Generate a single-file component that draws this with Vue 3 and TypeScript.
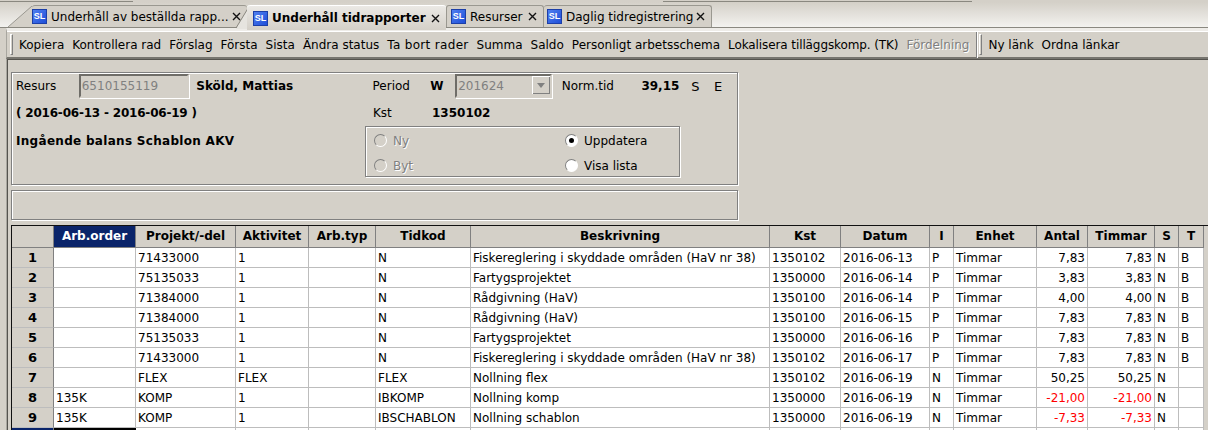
<template>
  <div class="page">
    <div class="tabstrip">
      <svg class="tab-slant" width="1208" height="29" viewBox="0 0 1208 29">
        <path d="M0 1.5 H133 M663 1.5 H972" stroke="#8a8880" fill="none" />
        <path d="M8 27 L32 6 V27 Z" stroke="none" fill="#d4d0c8" />
        <path d="M8 27 L32 6" stroke="#9a9890" fill="none" />
        <path d="M236 29 L250 5 H254 V29 Z" stroke="none" fill="#e6e4df" />
        <path d="M236 28 L250 5" stroke="#8a8880" fill="none" />
      </svg>
      <div
        v-for="tab in tabs"
        :key="tab.title"
        :class="['tab', tab.cls]"
      >
        <span class="sl-icon">SL</span>
        <span class="tab-title">{{ tab.title }}</span>
        <svg class="tab-close" width="9" height="9" viewBox="0 0 9 9">
          <path d="M1 1 L8 8 M8 1 L1 8" stroke="#111" stroke-width="1.4" fill="none" />
        </svg>
      </div>
    </div>

    <div class="toolbar">
      <span class="grip"></span>
      <span
        v-for="item in toolItems"
        :key="item.label"
        :class="['tool', item.cls, { disabled: item.disabled }]"
      >{{ item.label }}</span>
      <span class="tool-sep"></span>
      <span class="grip grip-right"></span>
      <span class="tool">Ny länk</span>
      <span class="tool">Ordna länkar</span>
    </div>

    <div class="content">
      <div class="panel panel-form">
        <div class="form-row row-top">
          <span class="lbl lbl-resurs">Resurs</span>
          <span class="field field-resurs">6510155119</span>
          <b class="name">Sköld, Mattias</b>
          <span class="lbl lbl-period">Period</span>
          <b class="lbl-w">W</b>
          <span class="field field-period">201624<span class="combo-btn"><i></i></span></span>
          <span class="lbl lbl-norm">Norm.tid</span>
          <b class="norm-value">39,15</b>
          <span class="flag">S</span>
          <span class="flag">E</span>
        </div>
        <div class="form-row row-mid">
          <b class="range">( 2016-06-13 - 2016-06-19 )</b>
          <span class="lbl lbl-kst">Kst</span>
          <b>1350102</b>
        </div>
        <div class="form-row row-bottom">
          <b class="balance">Ingående balans Schablon AKV</b>
          <div class="radio-box">
            <label
              v-for="radio in radios"
              :key="radio.label"
              :class="['radio', { off: radio.disabled }]"
            >
              <span :class="['dot', { checked: radio.checked }]"></span>
              {{ radio.label }}
            </label>
          </div>
        </div>
      </div>

      <div class="panel panel-empty"></div>

      <div class="grid">
        <div class="grid-row head">
          <div class="corner"></div>
          <div
            v-for="(col, i) in columns"
            :key="col"
            :class="['hcell', { active: i === 0 }]"
          >{{ col }}</div>
        </div>
        <div v-for="(row, r) in rows" :key="r" class="grid-row">
          <div class="rownum">{{ r + 1 }}</div>
          <div
            v-for="(val, c) in row"
            :key="c"
            :class="['cell', { num: c === 10 || c === 11, neg: val.startsWith('-') }]"
          >{{ val }}</div>
        </div>
        <div class="grid-row">
          <div class="rownum current"></div>
          <div class="cell focus"></div>
          <div v-for="c in 13" :key="c" class="cell"></div>
        </div>
      </div>
    </div>
  </div>
</template>

<script setup lang="ts">
interface ToolItem {
  label: string;
  cls?: string;
  disabled?: boolean;
}

const tabs = [
  { title: 'Underhåll av beställda rapp...', cls: 'tab-first' },
  { title: 'Underhåll tidrapporter', cls: 'tab-active' },
  { title: 'Resurser', cls: 'tab-res' },
  { title: 'Daglig tidregistrering', cls: 'tab-daily' },
];

const toolItems: ToolItem[] = [
  { label: 'Kopiera' },
  { label: 'Kontrollera rad' },
  { label: 'Förslag' },
  { label: 'Första' },
  { label: 'Sista' },
  { label: 'Ändra status' },
  { label: 'Ta bort rader', cls: 'tool-wide' },
  { label: 'Summa' },
  { label: 'Saldo' },
  { label: 'Personligt arbetsschema' },
  { label: 'Lokalisera tilläggskomp. (TK)', cls: 'tool-tight' },
  { label: 'Fördelning', disabled: true },
];

const radios = [
  { label: 'Ny', disabled: true },
  { label: 'Uppdatera', checked: true },
  { label: 'Byt', disabled: true },
  { label: 'Visa lista' },
];

const columns = [
  'Arb.order', 'Projekt/-del', 'Aktivitet', 'Arb.typ', 'Tidkod', 'Beskrivning', 'Kst',
  'Datum', 'I', 'Enhet', 'Antal', 'Timmar', 'S', 'T',
];

const FISK = 'Fiskereglering i skyddade områden (HaV nr 38)';

const rows: string[][] = [
  ['', '71433000', '1', '', 'N', FISK, '1350102', '2016-06-13', 'P', 'Timmar', '7,83', '7,83', 'N', 'B'],
  ['', '75135033', '1', '', 'N', 'Fartygsprojektet', '1350000', '2016-06-14', 'P', 'Timmar', '3,83', '3,83', 'N', 'B'],
  ['', '71384000', '1', '', 'N', 'Rådgivning (HaV)', '1350100', '2016-06-14', 'P', 'Timmar', '4,00', '4,00', 'N', 'B'],
  ['', '71384000', '1', '', 'N', 'Rådgivning (HaV)', '1350100', '2016-06-15', 'P', 'Timmar', '7,83', '7,83', 'N', 'B'],
  ['', '75135033', '1', '', 'N', 'Fartygsprojektet', '1350000', '2016-06-16', 'P', 'Timmar', '7,83', '7,83', 'N', 'B'],
  ['', '71433000', '1', '', 'N', FISK, '1350102', '2016-06-17', 'P', 'Timmar', '7,83', '7,83', 'N', 'B'],
  ['', 'FLEX', 'FLEX', '', 'FLEX', 'Nollning flex', '1350102', '2016-06-19', 'N', 'Timmar', '50,25', '50,25', 'N', ''],
  ['135K', 'KOMP', '1', '', 'IBKOMP', 'Nollning komp', '1350000', '2016-06-19', 'N', 'Timmar', '-21,00', '-21,00', 'N', ''],
  ['135K', 'KOMP', '1', '', 'IBSCHABLON', 'Nollning schablon', '1350000', '2016-06-19', 'N', 'Timmar', '-7,33', '-7,33', 'N', ''],
];
</script>

<style>
html,
body {
  margin: 0;
  background: #d4d0c8;
}
</style>

<style scoped>
.page {
  width: 1208px;
  height: 430px;
  overflow: hidden;
  background: #d4d0c8;
  color: #000;
  font: 12px "DejaVu Sans", sans-serif;
  white-space: nowrap;
}

/* Tabs */
.tabstrip {
  position: relative;
  display: flex;
  align-items: flex-end;
  height: 28px;
  box-sizing: border-box;
  padding-left: 32px;
  background: linear-gradient(#d4d0c8 8%, #f3f2ef);
  border-bottom: 1px solid #8a8880;
}

.tab-slant {
  position: absolute;
  left: 0;
  top: 0;
}

.tab {
  display: flex;
  align-items: center;
  height: 22px;
  box-sizing: border-box;
  border-top: 1px solid #9a9890;
  border-radius: 3px 3px 0 0;
  background: #d4d0c8;
}

.tab-first {
  width: 215px;
}

.tab-active {
  position: relative;
  width: 199px;
  height: 25px;
  margin-bottom: -3px;
  padding-left: 6px;
  border-top-color: #fff;
  background: linear-gradient(#ebe9e5, #d4d0c8);
  font-weight: bold;
}

.tab-res {
  width: 98px;
  padding-left: 4px;
  border-left: 1px solid #9a9890;
  border-right: 1px solid #9a9890;
}

.tab-daily {
  width: 168px;
  padding-left: 3px;
  border-right: 1px solid #9a9890;
}

.sl-icon {
  width: 15px;
  height: 15px;
  flex: none;
  box-sizing: border-box;
  margin-right: 4px;
  border: 1px solid #1c3fa8;
  background: linear-gradient(135deg, #4f7ff0, #1f4fd8);
  color: #fff;
  font: bold 9px/13px "Liberation Sans", sans-serif;
  text-align: center;
}

.tab-title {
  flex: 1;
}

.tab-close {
  flex: none;
  margin-right: 6px;
}

/* Toolbar */
.toolbar {
  display: flex;
  align-items: center;
  gap: 8px;
  height: 31px;
  box-sizing: border-box;
  margin-left: 6px;
  padding: 1px 0 0 3px;
  background: #d4d0c8;
  border-top: 3px solid #eeece8;
  border-left: 1px solid #a8a69f;
  border-bottom: 2px solid #77756f;
  box-shadow: inset 0 1px 0 #fff;
}

.grip {
  width: 1px;
  height: 19px;
  margin-right: -2px;
  border: 1px solid;
  border-color: #fff #808080 #808080 #fff;
}

.grip-right {
  margin-left: -7px;
}

.tool-sep {
  width: 0;
  height: 26px;
  margin-left: -1px;
  border-left: 1px solid #808080;
  border-right: 1px solid #fff;
}

.tool-wide {
  letter-spacing: 0.32px;
}

.tool-tight {
  letter-spacing: -0.1px;
}

.tool.disabled {
  color: #808080;
  text-shadow: 1px 1px 0 #fff;
}

/* Form panels */
.content {
  height: 371px;
  box-sizing: border-box;
  margin-left: 7px;
  padding: 12px 0 0 3px;
  border-left: 1px solid #55534e;
  border-top: 1px solid #55534e;
  box-shadow: -1px 0 0 #a8a69f;
}

.panel {
  width: 727px;
  box-sizing: border-box;
  border: 1px solid #808080;
  box-shadow: inset 1px 1px 0 #fff, 1px 1px 0 #fff;
}

.panel-form {
  height: 113px;
  padding: 1px 0 0 4px;
}

.panel-empty {
  height: 30px;
  margin-top: 5px;
}

.form-row {
  display: flex;
  align-items: center;
}

.row-top {
  height: 24px;
}

.row-mid {
  height: 28px;
  padding-top: 1px;
  box-sizing: border-box;
}

.row-bottom {
  align-items: flex-start;
}

.lbl-resurs {
  width: 63px;
}

.field {
  position: relative;
  display: block;
  height: 24px;
  box-sizing: border-box;
  padding: 2px 0 0 1px;
  border: 2px solid;
  border-color: #6f6d68 #d4d0c8 #d4d0c8 #6f6d68;
  box-shadow: 1px 1px 0 #fff;
  color: #808080;
  line-height: 16px;
}

.field-resurs {
  width: 111px;
}

.name {
  width: 177px;
  margin-left: 7px;
}

.lbl-period {
  width: 58px;
}

.lbl-w {
  width: 25px;
}

.field-period {
  width: 97px;
}

.combo-btn {
  position: absolute;
  right: 0;
  top: 0;
  display: flex;
  align-items: center;
  justify-content: center;
  width: 18px;
  height: 18px;
  background: #d4d0c8;
  box-shadow: inset 1px 1px 0 #fff, inset -1px -1px 0 #808080;
}

.combo-btn i {
  border: 4px solid transparent;
  border-top: 5px solid #808080;
  border-bottom: 0;
}

.lbl-norm {
  width: 80px;
  margin-left: 10px;
}

.norm-value {
  width: 50px;
}

.flag {
  width: 23px;
  font-size: 13px;
}

.range {
  width: 357px;
  letter-spacing: -0.2px;
}

.lbl-kst {
  width: 59px;
}

.balance {
  width: 349px;
  margin-top: 8px;
  letter-spacing: 0.3px;
}

.radio-box {
  display: grid;
  grid-template-columns: 191px 1fr;
  grid-auto-rows: 25px;
  align-items: center;
  width: 315px;
  height: 51px;
  box-sizing: border-box;
  padding: 1px 0 0 8px;
  border: 1px solid #808080;
  box-shadow: inset 1px 1px 0 #fff, 1px 1px 0 #fff;
}

.radio {
  display: flex;
  align-items: center;
  gap: 6px;
}

.radio.off {
  color: #808080;
  text-shadow: 1px 1px 0 #fff;
}

.dot {
  position: relative;
  width: 13px;
  height: 13px;
  box-sizing: border-box;
  border-radius: 50%;
  border: 1px solid;
  border-color: #808080 #fff #fff #808080;
  background: #fff;
}

.off .dot {
  background: transparent;
}

.dot.checked::after {
  content: "";
  position: absolute;
  left: 3px;
  top: 3px;
  width: 5px;
  height: 5px;
  border-radius: 50%;
  background: #000;
}

/* Time report grid */
.grid {
  margin-top: 5px;
  border-top: 1px solid #111;
  border-left: 1px solid #111;
}

.grid-row {
  display: grid;
  grid-template-columns: 42px 82px 100px 73px 67px 95px 299px 71px 89px 24px 83px 51px 67px 24px 25px;
  height: 20px;
}

.grid-row.head {
  height: 22px;
}

.corner,
.hcell,
.rownum {
  box-sizing: border-box;
  background: #d4d0c8;
  border-right: 1px solid #808080;
  border-bottom: 1px solid #808080;
  font-weight: bold;
  text-align: center;
}

.hcell {
  line-height: 21px;
  overflow: hidden;
}

.hcell.active {
  background: #0a246a;
  color: #fff;
}

.rownum {
  border-bottom-color: #bdbdbd;
  font-size: 13px;
  line-height: 19px;
}

.rownum.current {
  background: #0a246a;
}

.cell {
  box-sizing: border-box;
  padding-left: 2px;
  overflow: hidden;
  background: #fff;
  border-right: 1px solid #bdbdbd;
  border-bottom: 1px solid #bdbdbd;
  line-height: 20px;
}

.cell.num {
  padding-right: 2px;
  text-align: right;
}

.cell.neg {
  color: #f00;
}

.cell.focus {
  border: 2px solid #000;
}
</style>
